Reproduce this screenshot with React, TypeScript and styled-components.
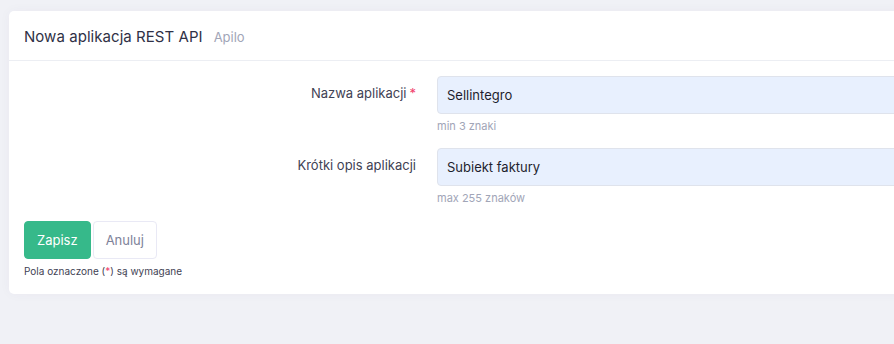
import React from "react";
import styled, { createGlobalStyle } from "styled-components";

const Global = createGlobalStyle`
  html, body { margin: 0; padding: 0; }
  body {
    background: #f0f1f6;
    font-family: Inter, "Noto Sans", sans-serif;
    color: #3f4254;
    overflow: hidden;
  }
`;

const Page = styled.div`
  padding: 11px 0 0 9px;
  height: 344px;
  box-sizing: border-box;
`;

const Card = styled.div`
  width: 920px;
  background: #ffffff;
  border-radius: 5px;
  box-shadow: 0 0 12px rgba(82, 63, 105, 0.04);
`;

const Header = styled.div`
  display: flex;
  align-items: baseline;
  gap: 11px;
  height: 50px;
  box-sizing: border-box;
  padding: 16px 15px 0;
  border-bottom: 1px solid #eceef3;
`;

const Title = styled.h3`
  margin: 0;
  font-size: 15px;
  font-weight: 400;
  color: #2f3146;
  letter-spacing: 0.05px;
`;

const Subtitle = styled.span`
  font-size: 13px;
  color: #a1a5b7;
`;

const Body = styled.div`
  padding: 15px 15px 17px;
`;

const FormRow = styled.div`
  display: grid;
  grid-template-columns: 392px 1fr;
  column-gap: 21px;
  margin-bottom: 15px;
`;

const Label = styled.label`
  text-align: right;
  font-size: 13px;
  padding-top: 9px;
  color: #3f4254;
`;

const Required = styled.span`
  color: #f1416c;
  margin-left: 3px;
`;

const Field = styled.div`
  display: flex;
  flex-direction: column;
`;

const Input = styled.input`
  height: 38px;
  box-sizing: border-box;
  border: 1px solid #dfe3ec;
  border-radius: 4px;
  background: #e8f0fe;
  padding: 0 9px;
  font-family: inherit;
  font-size: 13px;
  color: #1e1e2d;
  outline: none;
`;

const Hint = styled.div`
  margin-top: 5px;
  font-size: 11px;
  color: #a1a5b7;
`;

const Actions = styled.div`
  display: flex;
  gap: 2px;
  margin-top: 16px;
`;

const Button = styled.button<{ $primary?: boolean }>`
  height: 38px;
  box-sizing: border-box;
  padding: 0 12px;
  border-radius: 4px;
  font-family: inherit;
  font-size: 13px;
  cursor: pointer;
  border: 1px solid ${(p) => (p.$primary ? "#36b98a" : "#e9e9f5")};
  background: ${(p) => (p.$primary ? "#36b98a" : "#ffffff")};
  color: ${(p) => (p.$primary ? "#ffffff" : "#7e8299")};
`;

const Note = styled.div`
  margin-top: 6px;
  font-size: 10px;
  color: #3f4254;
`;

const Star = styled.span`
  color: #f1416c;
`;

export default function App() {
  return (
    <>
      <Global />
      <Page>
        <Card>
          <Header>
            <Title>Nowa aplikacja REST API</Title>
            <Subtitle>Apilo</Subtitle>
          </Header>
          <Body>
            <FormRow>
              <Label>
                Nazwa aplikacji<Required>*</Required>
              </Label>
              <Field>
                <Input defaultValue="Sellintegro" />
                <Hint>min 3 znaki</Hint>
              </Field>
            </FormRow>
            <FormRow>
              <Label>Krótki opis aplikacji</Label>
              <Field>
                <Input defaultValue="Subiekt faktury" />
                <Hint>max 255 znaków</Hint>
              </Field>
            </FormRow>
            <Actions>
              <Button $primary>Zapisz</Button>
              <Button>Anuluj</Button>
            </Actions>
            <Note>
              Pola oznaczone (<Star>*</Star>) są wymagane
            </Note>
          </Body>
        </Card>
      </Page>
    </>
  );
}
